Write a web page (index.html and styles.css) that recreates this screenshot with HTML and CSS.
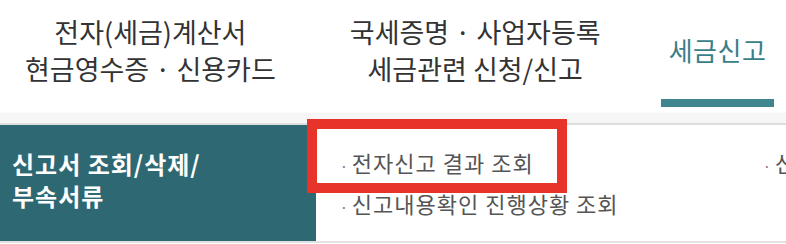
FILE: index.html
```html
<!DOCTYPE html>
<html>
  <head>
    <link rel="stylesheet" href="styles.css">
  </head>
  <body>
    <div class="header">
      <ul class="gnb">
        <li class="gnb-item">전자(세금)계산서<br>현금영수증 · 신용카드</li>
        <li class="gnb-item">국세증명 · 사업자등록<br>세금관련 신청/신고</li>
        <li class="gnb-item active">세금신고</li>
      </ul>
    </div>

    <div class="sub-row">
      <div class="sub-title">신고서 조회/삭제/<br>부속서류</div>
      <ul class="sub-list">
        <li>전자신고 결과 조회</li>
        <li>신고서 조회</li>
        <li>신고내용확인 진행상황 조회</li>
      </ul>
      <div class="mark"></div>
    </div>
  </body>
</html>
```

FILE: styles.css
```css
body {
  margin: 0;
  background: #fff;
  font-family: "Noto Sans CJK KR", "Noto Sans", sans-serif;
  overflow: hidden;
}
ul {
  list-style: none;
  margin: 0;
  padding: 0;
}
.header {
  height: 123px;
  background: linear-gradient(#fff 0, #fff 112px, #f6f6f6 113px, #f6f6f6 123px);
  border-bottom: 2px solid #dedede;
}
.gnb {
  display: flex;
  gap: 58px;
  padding-left: 17px;
}
.gnb-item {
  display: flex;
  align-items: center;
  height: 99px;
  padding: 0 8px;
  border-bottom: 8px solid transparent;
  text-align: center;
  font-size: 27px;
  line-height: 37px;
  color: #333;
  white-space: nowrap;
}
.gnb-item.active {
  margin-left: -6px;
  padding: 0 8px;
  font-size: 26px;
  letter-spacing: 0.5px;
  color: #3a7e89;
  border-bottom-color: #3f8691;
}
.sub-row {
  position: relative;
  display: flex;
  height: 116px;
  border-bottom: 2px solid #e2e2e2;
}
.sub-title {
  width: 304px;
  padding: 23px 0 0 12px;
  background: #2e6872;
  color: #fff;
  font-size: 24px;
  font-weight: bold;
  line-height: 32px;
  letter-spacing: 1px;
}
.sub-list {
  display: grid;
  grid-template-columns: 423px 1fr;
  grid-auto-rows: 41px;
  padding: 17px 0 0 24px;
  flex: 1;
  white-space: nowrap;
  overflow: hidden;
}
.sub-list li {
  font-size: 22px;
  line-height: 41px;
  letter-spacing: 1px;
  color: #555;
}
.sub-list li::before {
  content: "·";
  margin-right: 3px;
  color: #777;
  font-size: 14px;
}
.mark {
  position: absolute;
  left: 307px;
  top: -6px;
  width: 240px;
  height: 54px;
  border: 10px solid #e8332a;
}
```
